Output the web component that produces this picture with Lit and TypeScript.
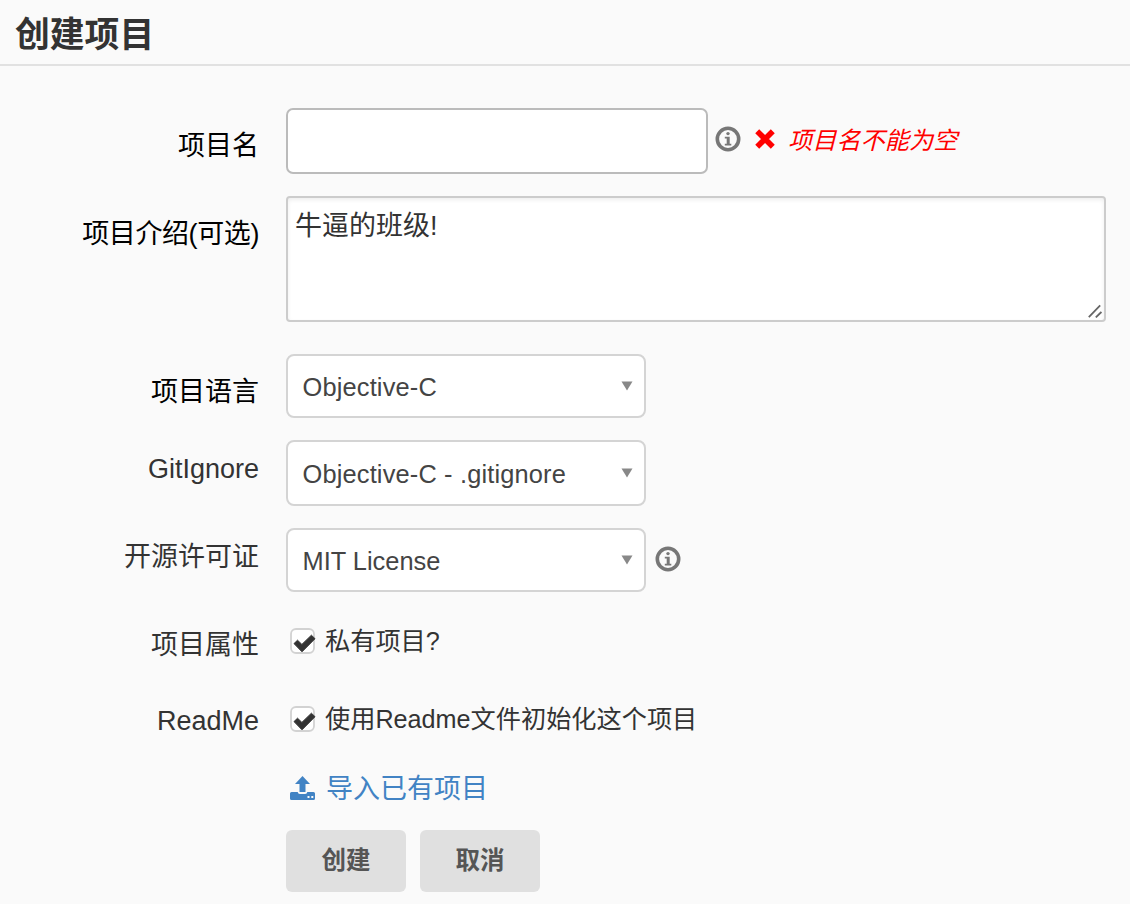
import { LitElement, html, css, svg, nothing } from "lit";
import { customElement, property } from "lit/decorators.js";

const infoIcon = html`<svg class="info" width="26" height="26" viewBox="0 0 26 26">
  <circle cx="13" cy="13" r="10.7" fill="none" stroke="#777" stroke-width="3.6" />
  <circle cx="13" cy="7.6" r="1.7" fill="#777" />
  <path d="M9.8 10.8h4.9v6.9h1.6v1.8H9.8v-1.8h1.9v-5.1H9.8z" fill="#777" />
</svg>`;

const checkMark = svg`<path d="M4 15.6l3.5-3.4 4.4 4.2 9.5-9.2 3.6 3.5L12 23.8z" fill="#333" stroke="#333" stroke-width="1" stroke-linejoin="round" />`;

@customElement("check-box")
export class CheckBox extends LitElement {
  static styles = css`
    :host { display: block; width: 28px; height: 28px; }
    svg { display: block; }
  `;
  @property({ type: Boolean }) checked = false;
  render() {
    return html`<svg width="28" height="28" viewBox="0 0 28 28">
      <rect x="1" y="1" width="23" height="24" rx="5" fill="#fff" stroke="#d2d2d2" stroke-width="1.8" />
      ${this.checked ? checkMark : nothing}
    </svg>`;
  }
}

@customElement("select-box")
export class SelectBox extends LitElement {
  static styles = css`
    :host {
      box-sizing: border-box;
      display: flex;
      align-items: center;
      justify-content: space-between;
      width: 360px;
      border: 2px solid #d4d4d4;
      border-radius: 8px;
      background: #fff;
      color: #444;
      font-size: 25.4px;
      line-height: 32px;
      padding: 3px 11px 0 14.5px;
    }
    .value { margin-bottom: 2px; }
    svg { display: block; margin-bottom: 4px; }
  `;
  @property() value = "";
  render() {
    return html`<span class="value">${this.value}</span>
      <svg width="12" height="10" viewBox="0 0 12 10"><path d="M0.5 0.5h11L6 9.5z" fill="#888" /></svg>`;
  }
}

@customElement("app-root")
export class AppRoot extends LitElement {
  static styles = css`
    :host {
      display: block;
      height: 904px;
      overflow: hidden;
      background: #fafafa;
      color: #333;
      font-family: "Liberation Sans", "Noto Sans CJK SC", sans-serif;
      font-size: 27px;
      line-height: 32px;
    }
    .title {
      box-sizing: border-box;
      height: 66px;
      margin: 0;
      padding: 14px 0 0 15px;
      border-bottom: 2px solid #e1e1e1;
      font-size: 34.8px;
      line-height: 42px;
      font-weight: 700;
      color: #333;
    }
    .form { display: flex; flex-direction: column; padding-top: 42px; }
    .row {
      display: grid;
      grid-template-columns: 259px 820px;
      column-gap: 27px;
    }
    .label { text-align: right; white-space: nowrap; }
    .dark { color: #000; }
    .low { padding-top: 22px; }
    .mid { padding-top: 13px; }
    .name { height: 66px; margin-bottom: 22px; }
    .intro { height: 126px; margin-bottom: 32px; }
    .intro .label { letter-spacing: -0.4px; }
    .language { height: 64px; margin-bottom: 22px; }
    .ignore { height: 66px; margin-bottom: 22px; }
    .license { height: 64px; margin-bottom: 36px; }
    .private { height: 28px; margin-bottom: 50px; }
    .private .label { padding-top: 1px; }
    .readme { height: 28px; margin-bottom: 38px; }
    .readme .label { margin-top: -1px; }
    .language select-box, .ignore select-box { letter-spacing: 0.16px; }
    .import { height: 32px; margin-bottom: 26px; }
    .line { display: flex; }
    .input {
      box-sizing: border-box;
      width: 422px;
      height: 66px;
      border: 2px solid #bbb;
      border-radius: 7px;
      background: #fff;
      padding: 0 14px;
      font: inherit;
    }
    .info { display: block; }
    .name .info { margin: 18px 0 0 7px; }
    .license .info { margin: 18px 0 0 9px; }
    .cross { margin: 21px 0 0 14px; }
    .error { color: #f00; font-style: italic; font-size: 24.2px; margin: 17px 0 0 13px; }
    .area { position: relative; }
    .textarea {
      display: block;
      box-sizing: border-box;
      width: 820px;
      height: 126px;
      margin: 0;
      border: 2px solid #ccc;
      border-radius: 4px;
      padding: 12px 7px 8px;
      background: #fff;
      box-shadow: inset 0 2px 4px rgba(0, 0, 0, 0.07);
      font: inherit;
      color: #333;
      resize: none;
      outline: none;
    }
    .grip { position: absolute; right: 4px; bottom: 4px; }
    .option { display: flex; padding-left: 4px; gap: 7px; font-size: 25.2px; line-height: 27px; white-space: nowrap; }
    .link { display: flex; padding-left: 4px; gap: 11px; color: #4183c4; text-decoration: none; }
    .link svg { margin-top: 4px; }
    .link span { padding-top: 1px; }
    .buttons { display: flex; gap: 14px; }
    .button {
      width: 120px;
      height: 62px;
      padding: 0;
      border: 0;
      border-radius: 6px;
      background: #e0e0e0;
      color: #555;
      font: 700 24.5px/32px "Liberation Sans", "Noto Sans CJK SC", sans-serif;
    }
  `;

  render() {
    return html`
      <h1 class="title">创建项目</h1>
      <div class="form">
        <div class="row name">
          <div class="label dark low">项目名</div>
          <div class="line">
            <input class="input" />
            ${infoIcon}
            <svg class="cross" width="20" height="20" viewBox="0 0 20 20">
              <path d="M4.2 4.2L15.8 15.8M15.8 4.2L4.2 15.8" fill="none" stroke="#f00" stroke-width="5.6" stroke-linecap="square" />
            </svg>
            <span class="error">项目名不能为空</span>
          </div>
        </div>
        <div class="row intro">
          <div class="label dark low">项目介绍(可选)</div>
          <div class="area">
            <textarea class="textarea" .value=${"牛逼的班级!"}></textarea>
            <svg class="grip" width="14" height="14" viewBox="0 0 14 14">
              <path d="M0.8 13.2L12.2 1.4M7.8 13.4L13.4 8" fill="none" stroke="#666" stroke-width="1.8" />
            </svg>
          </div>
        </div>
        <div class="row language">
          <div class="label dark low">项目语言</div>
          <div class="line"><select-box value="Objective-C"></select-box></div>
        </div>
        <div class="row ignore">
          <div class="label mid">GitIgnore</div>
          <div class="line"><select-box value="Objective-C - .gitignore"></select-box></div>
        </div>
        <div class="row license">
          <div class="label mid">开源许可证</div>
          <div class="line"><select-box value="MIT License"></select-box>${infoIcon}</div>
        </div>
        <div class="row private">
          <div class="label">项目属性</div>
          <div class="option"><check-box checked></check-box><span>私有项目?</span></div>
        </div>
        <div class="row readme">
          <div class="label">ReadMe</div>
          <div class="option"><check-box checked></check-box><span>使用Readme文件初始化这个项目</span></div>
        </div>
        <div class="row import">
          <span></span>
          <a class="link">
            <svg width="25" height="24" viewBox="0 0 25 24">
              <path d="M12.5 0L20 8H15.5V16H9.5V8H5z" fill="#4183c4" />
              <path fill-rule="evenodd" d="M1.5 16H7.7Q8 18 9.8 18H15.2Q17 18 17.3 16H23.5Q25 16 25 17.5V22.5Q25 24 23.5 24H1.5Q0 24 0 22.5V17.5Q0 16 1.5 16zM17.5 20v2h2v-2zM21.3 20v2h2v-2z" fill="#4183c4" />
            </svg>
            <span>导入已有项目</span>
          </a>
        </div>
        <div class="row">
          <span></span>
          <div class="buttons">
            <button class="button">创建</button>
            <button class="button">取消</button>
          </div>
        </div>
      </div>
    `;
  }
}
